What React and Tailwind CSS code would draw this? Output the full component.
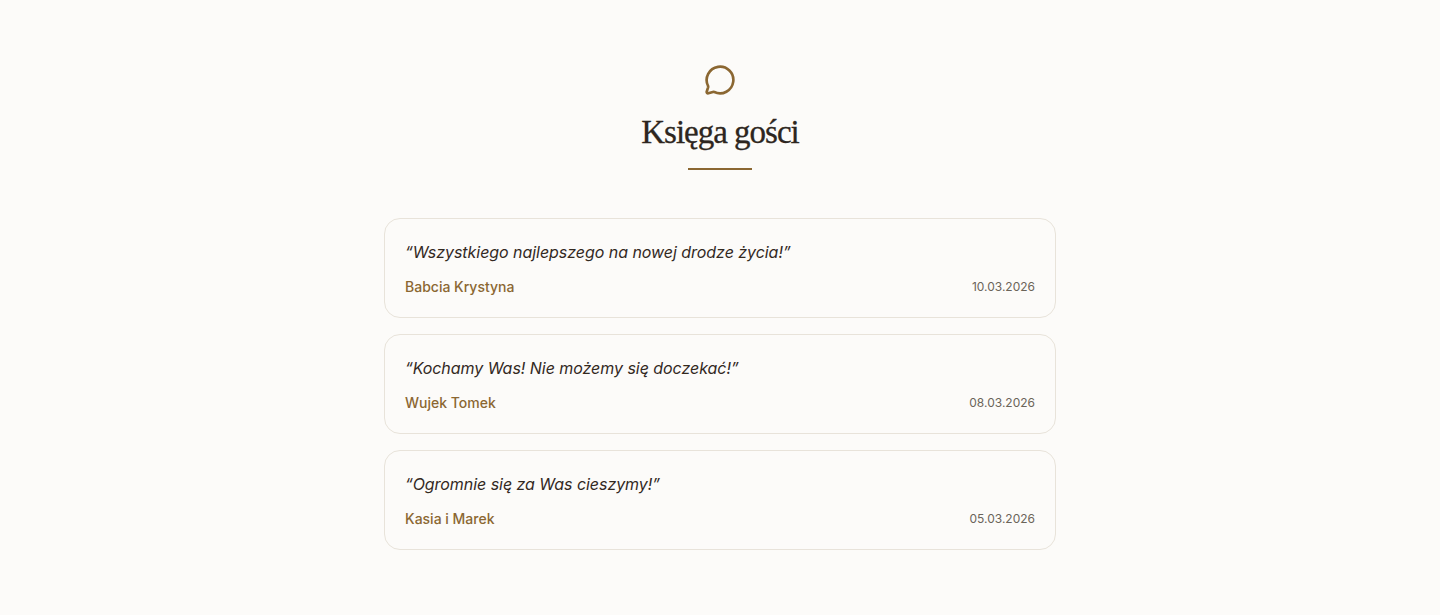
import { MessageCircle } from 'lucide-react';

const wishes = [
  { id: 1, text: '“Wszystkiego najlepszego na nowej drodze życia!”', author: 'Babcia Krystyna', date: '10.03.2026' },
  { id: 2, text: '“Kochamy Was! Nie możemy się doczekać!”', author: 'Wujek Tomek', date: '08.03.2026' },
  { id: 3, text: '“Ogromnie się za Was cieszymy!”', author: 'Kasia i Marek', date: '05.03.2026' },
];

const App = () => {
  return (
    <div className="min-h-[615px] bg-[#fcfbf9] py-16 font-['Inter',sans-serif] text-[#33291f]">
      <div className="mx-auto max-w-2xl">
        <div className="mb-12 flex flex-col items-center">
          <MessageCircle className="mb-4 h-8 w-8 text-[#8b6732]" strokeWidth={2} />
          <h2 className="font-['Liberation_Serif',serif] text-[33px] leading-10 tracking-[-1px] text-[#2d2620] [-webkit-text-stroke:0.3px_#2d2620]">Księga gości</h2>
          <div className="mt-4 h-0.5 w-16 bg-[#8b6732]" />
        </div>
        <div className="flex flex-col gap-4">
          {wishes.map(wish => (
            <div key={wish.id} className="rounded-2xl border border-[#e8e3da] bg-[#fcfbf9] p-5">
              <p className="mb-3 text-base italic leading-relaxed tracking-[-0.045px] text-[#33291f]">{wish.text}</p>
              <div className="flex items-center justify-between">
                <span className="text-sm font-medium text-[#8b6732]">{wish.author}</span>
                <span className="text-xs text-[#6b6459]">{wish.date}</span>
              </div>
            </div>
          ))}
        </div>
      </div>
    </div>
  );
};

export default App;
